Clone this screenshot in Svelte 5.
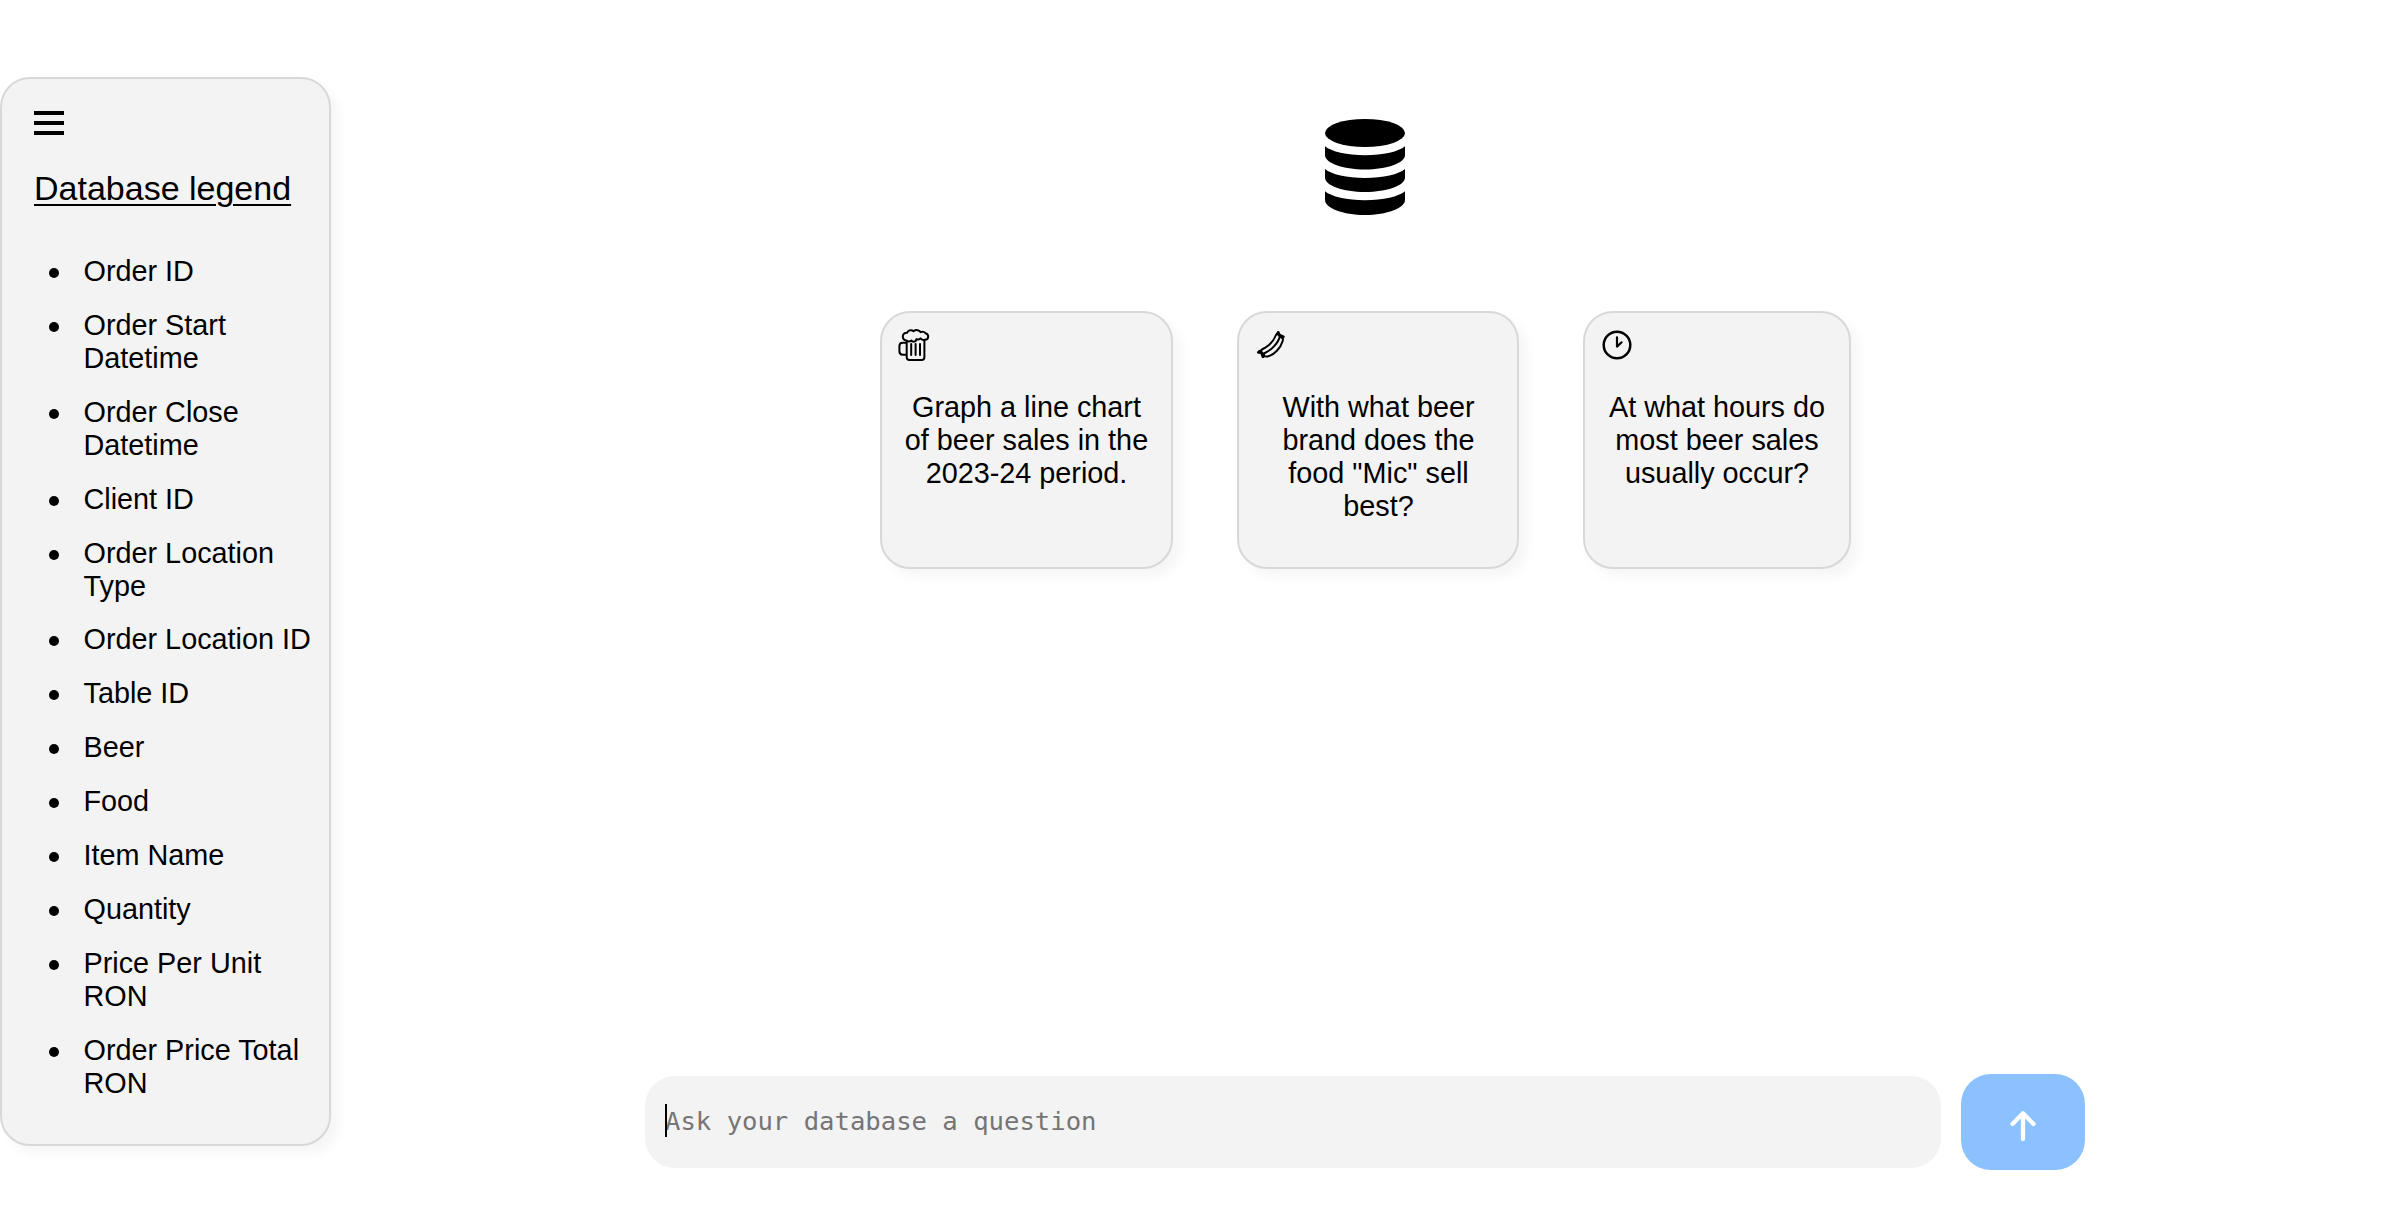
<script>
  const fields = [
    'Order ID', 'Order Start Datetime', 'Order Close Datetime', 'Client ID',
    'Order Location Type', 'Order Location ID', 'Table ID', 'Beer', 'Food',
    'Item Name', 'Quantity', 'Price Per Unit RON', 'Order Price Total RON'
  ];
  const prompts = [
    { icon: 'beer', text: 'Graph a line chart of beer sales in the 2023-24 period.' },
    { icon: 'sausage', text: 'With what beer brand does the food "Mic" sell best?' },
    { icon: 'clock', text: 'At what hours do most beer sales usually occur?' }
  ];
  let question = $state('');
</script>

<div class="page">
  <aside class="legend">
    <button class="menu" aria-label="Toggle legend">
      <span></span><span></span><span></span>
    </button>
    <h2>Database legend</h2>
    <ul>
      {#each fields as field}
        <li>{field}</li>
      {/each}
    </ul>
  </aside>

  <main>
    <svg class="logo" viewBox="0 0 80 96" aria-hidden="true">
      <ellipse cx="40" cy="14" rx="40" ry="14" />
      <path d="M0 27.3C6 32.5 22 36.3 40 36.3S74 32.5 80 27.3V36C80 44 62 50.5 40 50.5S0 44 0 36Z" />
      <path d="M0 50C6 55.2 22 59 40 59S74 55.2 80 50V58.5C80 66.5 62 73 40 73S0 66.5 0 58.5Z" />
      <path d="M0 72.3C6 77.5 22 81.3 40 81.3S74 77.500 80 72.3V81C80 89 62 96 40 96S0 89 0 81Z" />
    </svg>

    <section class="cards">
      {#each prompts as prompt}
        <button class="card {prompt.icon}">
          {#if prompt.icon === 'beer'}
            <svg class="icon" viewBox="0 0 32 32" aria-hidden="true">
              <path d="M8.7 12V28.3Q8.7 31 11.4 31H23.7Q26.4 31 26.4 28.3V11.5M8.7 13.7H4.8Q1.4 13.7 1.4 17V22.3Q1.4 25.7 4.8 25.7H8.7" />
              <path d="M8.5 11.5C3.5 11 3.5 3.5 9 3.7C10.500 .7 14 .8 15.5 2.2C18 .3 21.5 1 22.5 3.2C24.5 2.2 27 3 27.3 4.3C31.2 5 31.2 10.8 27 10.8C25 11.3 23.5 10.5 22.5 9.3C21.5 11 19.5 10.8 18.5 10C18 13 14.5 13.5 13.5 11.5C12 12.8 10 12.8 8.5 11.5Z" />
              <path d="M13.2 15V26M17.6 15V26M22 15V26" />
            </svg>
          {:else if prompt.icon === 'sausage'}
            <svg class="icon" viewBox="0 0 32 32" aria-hidden="true">
              <path d="M5.500 23C5.300 20.800 7.500 20.200 10 18.800C15 16 19 11 21 6C21.800 4.300 24 4.300 25 6.500C24 13 17 21 9 24.500" />
              <path d="M25.500 7.500C28.300 7.500 28.300 10 27.500 12.500C25.500 19.500 19 26 12.500 27.500C9.500 28 7.800 26.800 9 24.500" />
              <path class="tip" d="M3.300 23.300L6.500 23.500L8 27.800M4.500 22.300L8.500 26M23.300 3.400L24.300 6L28.300 7.700M22.500 4.500L26.800 8.500" />
            </svg>
          {:else}
            <svg class="icon" viewBox="0 0 32 32" aria-hidden="true">
              <circle cx="16" cy="16" r="13.3" />
              <path class="hands" d="M16 8.300V17.600L20.6 13.3" />
            </svg>
          {/if}
          <span>{prompt.text}</span>
        </button>
      {/each}
    </section>

    <form class="ask" onsubmit={(e) => e.preventDefault()}>
      <div class="field">
        <i class="caret"></i>
        <input bind:value={question} placeholder="Ask your database a question" />
      </div>
      <button class="send" aria-label="Send">
        <svg viewBox="0 0 26 30" aria-hidden="true"><path d="M13 28V2.3M2.500 13L13 2.3L23.5 13" /></svg>
      </button>
    </form>
  </main>
</div>

<style>
  :global(body) { background: #fff; overflow: hidden; }
  .page {
    box-sizing: border-box;
    display: flex;
    height: 1216px;
    color: #000;
    font: 28.8px/33px 'Liberation Sans', Arial, sans-serif;
  }
  button { margin: 0; border: 0; padding: 0; background: none; color: inherit; font: inherit; }
  .legend, .card {
    box-sizing: border-box;
    border: 2px solid #d8d8d8;
    border-radius: 30px;
    background: #f3f3f3;
    box-shadow: 8px 8px 12px rgba(0, 0, 0, 0.04);
  }
  .legend { width: 331px; height: 1069px; margin-top: 77px; padding: 32px 9px 0 32px; flex: none; }
  .menu { display: flex; flex-direction: column; gap: 6px; width: 30px; }
  .menu span { height: 4px; background: #000; }
  h2 {
    margin: 33px 0 47px;
    font-size: 34px;
    line-height: 40px;
    font-weight: 400;
    text-decoration: underline;
    text-decoration-thickness: 2px;
    text-underline-offset: 4px;
    white-space: nowrap;
  }
  ul { display: flex; flex-direction: column; gap: 20.9px; margin: 0; padding: 0 0 0 49.5px; list-style: none; }
  li { position: relative; }
  li::before {
    content: '';
    position: absolute;
    left: -34.5px;
    top: 13px;
    width: 10px;
    height: 10px;
    border-radius: 50%;
    background: #000;
  }
  main { flex: 1; display: flex; flex-direction: column; align-items: center; padding: 119px 0 46px; }
  .logo { width: 80px; height: 96px; margin-right: 1px; }
  .cards { display: flex; gap: 64px; margin-top: 96px; }
  .card { display: flex; flex-direction: column; height: 258px; padding: 16px; text-align: center; }
  .beer { width: 293px; }
  .sausage { width: 282px; }
  .clock { width: 268px; }
  .icon {
    width: 32px;
    height: 32px;
    margin-bottom: 30px;
    fill: none;
    stroke: #000;
    stroke-width: 2;
    stroke-linecap: round;
    stroke-linejoin: round;
  }
  .clock .icon { stroke-width: 2.5; }
  .clock .hands { stroke-width: 2.2; }
  .tip { stroke-width: 2.8; }
  .card span { width: 100%; }
  .sausage span { box-sizing: border-box; padding: 0 19px 0 20px; }
  .ask { display: flex; align-items: center; gap: 20px; width: 1440px; margin-top: auto; margin-right: 1px; }
  .field {
    position: relative;
    box-sizing: border-box;
    width: 1296px;
    height: 92px;
    padding: 0 20px;
    border-radius: 30px;
    background: #f3f3f3;
  }
  .caret { position: absolute; left: 20px; top: 28px; width: 2px; height: 33px; background: #000; }
  input {
    width: 100%;
    height: 90px;
    border: 0;
    padding: 0;
    outline: 0;
    background: none;
    font: 25.6px 'DejaVu Sans Mono', monospace;
  }
  input::placeholder { color: #757575; opacity: 1; }
  .send {
    display: flex;
    align-items: center;
    justify-content: center;
    width: 124px;
    height: 96px;
    padding-top: 8px;
    border-radius: 30px;
    background: #8bc1ff;
  }
  .send svg { width: 26px; height: 30px; fill: none; stroke: #fff; stroke-width: 4.3; stroke-linecap: round; stroke-linejoin: round; }
</style>
